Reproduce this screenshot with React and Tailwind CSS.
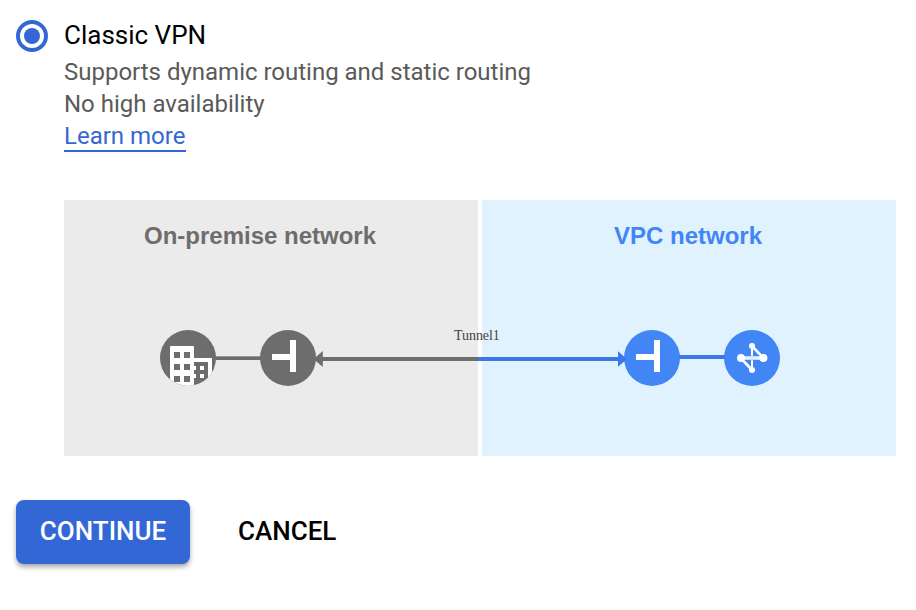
const GREY = "#6d6d6d";
const BLUE = "#4285f4";

function Gateway({ cx, fill }) {
  return (
    <g>
      <circle cx={cx} cy="158" r="28" fill={fill} />
      <path d={`M${cx + 2} 140h6v32h-6v-12h-18v-6h18z`} fill="#fff" />
    </g>
  );
}

function Topology() {
  return (
    <svg className="absolute inset-0" width="832" height="256" viewBox="0 0 832 256">
      <defs>
        <clipPath id="site">
          <circle cx="124" cy="158" r="28" />
        </clipPath>
      </defs>
      <path d="M150 158h48" stroke={GREY} strokeWidth="4" />
      <path d="M150 156.5h48" stroke="#979797" strokeWidth="1" />
      <path d="M256 159h158" stroke={GREY} strokeWidth="4" />
      <path d="M414 159h142" stroke="#3b78e7" strokeWidth="4" />
      <circle cx="124" cy="158" r="28" fill={GREY} />
      <g clipPath="url(#site)">
        <path
          fill="#fff"
          fillRule="evenodd"
          d="M107 146h22a1 1 0 0 1 1 1v11h18v30h-4v-26h-14v26h-24v-41a1 1 0 0 1 1-1zM110 152v6h6v-6zM120 152v6h6v-6zM110 164v6h6v-6zM120 164v6h6v-6zM110 176v6h6v-6zM120 176v6h6v-6z"
        />
        <path fill="#fff" d="M130 166h2v4h-2zM130 174h2v4h-2zM136 166h4v4h-4zM136 174h4v4h-4z" />
      </g>
      <Gateway cx={224} fill={GREY} />
      <path d="M249.500 159l9.300-8v16z" fill={GREY} />
      <Gateway cx={588} fill={BLUE} />
      <path d="M563 159l-9-7.700v15.400z" fill="#3b78e7" />
      <circle cx="688" cy="158" r="28" fill={BLUE} />
      <path d="M615 157h46" stroke="#3b78e7" strokeWidth="4" />
      <g stroke="#fff" fill="none">
        <path d="M688 146v24" strokeWidth="2" />
        <path d="M688 146l11.400 12M676.700 158l11.300 12" strokeWidth="2.600" />
        <path d="M680 158h17" stroke={BLUE} strokeWidth="4.400" />
        <path d="M677 158h22" strokeWidth="3.600" strokeOpacity=".88" />
      </g>
      <g fill="#fff">
        <circle cx="677" cy="158" r="4" />
        <circle cx="699.400" cy="158" r="4" />
        <circle cx="688" cy="146" r="3" />
        <circle cx="688" cy="170" r="3" />
      </g>
    </svg>
  );
}

export default function App() {
  return (
    <main className="h-[610px] w-[916px] overflow-hidden bg-white px-4 pt-5 font-[Roboto,sans-serif]">
      <section className="flex gap-4">
        <div className="flex size-8 shrink-0 items-center justify-center rounded-full border-4 border-[#3367d6]">
          <div className="size-4 rounded-full bg-[#3367d6]" />
        </div>
        <div>
          <h1 className="h-9 text-[26px] leading-[31px] text-black">Classic VPN</h1>
          <p className="text-2xl leading-8 tracking-[-0.01px] text-[#5a5a5a]">Supports dynamic routing and static routing</p>
          <p className="text-2xl leading-8 tracking-[-0.01px] text-[#5a5a5a]">No high availability</p>
          <a className="block h-8 w-[122px] whitespace-nowrap border-b-2 border-[#3367d6] text-2xl leading-8 text-[#3367d6]">
            Learn more
          </a>
        </div>
      </section>
      <section className="relative ml-12 mt-12 grid h-64 w-[832px] grid-cols-2 gap-1 font-['Liberation_Sans',sans-serif] text-2xl font-bold">
        <div className="bg-[#ebebeb] pl-20 pt-5 leading-8 text-[#6d6d6d]">On-premise network</div>
        <div className="bg-[#e0f2fe] pl-[132px] pt-5 leading-8 text-[#4285f4]">VPC network</div>
        <Topology />
        <span className="absolute left-[390px] top-[128px] font-['Liberation_Serif',serif] text-sm leading-4 font-normal tracking-[-0.05px] text-[#444]">
          Tunnel1
        </span>
      </section>
      <div className="mt-11 flex h-16 items-center gap-12 text-[26px] font-medium">
        <button className="h-16 w-[174px] rounded-lg bg-[#3367d6] pb-0.5 text-white shadow-[0_3px_5px_rgba(0,0,0,0.35)]">
          CONTINUE
        </button>
        <button className="pb-0.5 text-black">CANCEL</button>
      </div>
    </main>
  );
}
